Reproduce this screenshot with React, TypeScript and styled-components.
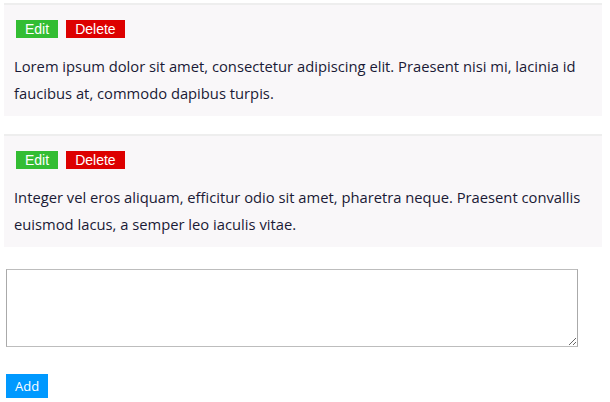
import React from "react";
import styled, { createGlobalStyle } from "styled-components";

const Global = createGlobalStyle`
  html, body { margin: 0; padding: 0; background: #ffffff; }
  body { font-family: "Open Sans", "Noto Sans", sans-serif; }
`;

const Page = styled.div`
  width: 610px;
  padding-top: 3px;
  display: flex;
  flex-direction: column;
`;

const Card = styled.section`
  margin: 0 8px 18px 4px;
  background: #f9f7f9;
  border-top: 2px solid #eeeeee;
  padding: 15px 10px 9px 10px;
`;

const ButtonRow = styled.div`
  display: flex;
  gap: 8px;
  padding-left: 2px;
`;

const ActionButton = styled.button<{ $tone: "edit" | "delete" }>`
  height: 18px;
  padding: 0 9px;
  border: none;
  border-radius: 0;
  background: ${(p) => (p.$tone === "edit" ? "#33bd33" : "#dd0000")};
  color: #ffffff;
  font-family: "Liberation Sans", Arial, sans-serif;
  font-size: 14px;
  line-height: 18px;
  cursor: pointer;
`;

const Text = styled.p`
  margin: 15px 0 0 0;
  font-size: 14.75px;
  line-height: 27px;
  color: #1a1a36;
`;

const Form = styled.div`
  padding: 4px 0 0 6px;
  display: flex;
  flex-direction: column;
  align-items: flex-start;
`;

const TextArea = styled.textarea`
  width: 572px;
  height: 78px;
  box-sizing: border-box;
  border: 1px solid #bdbdbd;
  border-left-color: #aaaaaa;
  border-right-color: #aaaaaa;
  margin: 0;
  padding: 2px;
  background: #fff;
  font-family: "Open Sans", sans-serif;
`;

const AddButton = styled.button`
  margin-top: 27px;
  height: 24px;
  padding: 0 9px;
  border: none;
  border-radius: 0;
  background: #0099ff;
  color: #ffffff;
  font-family: "Open Sans", sans-serif;
  font-size: 13px;
  cursor: pointer;
`;

const items = [
  "Lorem ipsum dolor sit amet, consectetur adipiscing elit. Praesent nisi mi, lacinia id faucibus at, commodo dapibus turpis.",
  "Integer vel eros aliquam, efficitur odio sit amet, pharetra neque. Praesent convallis euismod lacus, a semper leo iaculis vitae.",
];

export default function App() {
  return (
    <>
      <Global />
      <Page>
        {items.map((t, i) => (
          <Card key={i}>
            <ButtonRow>
              <ActionButton $tone="edit">Edit</ActionButton>
              <ActionButton $tone="delete">Delete</ActionButton>
            </ButtonRow>
            <Text>{t}</Text>
          </Card>
        ))}
        <Form>
          <TextArea />
          <AddButton>Add</AddButton>
        </Form>
      </Page>
    </>
  );
}
